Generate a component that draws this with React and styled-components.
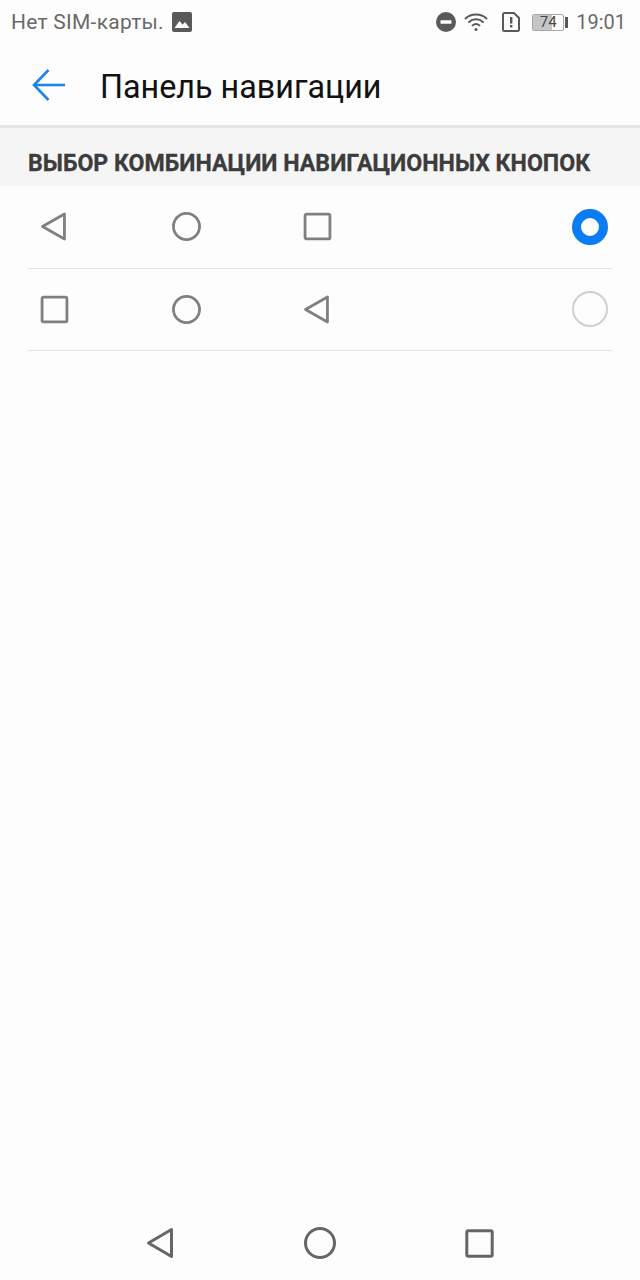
import React from 'react'
import styled, { createGlobalStyle } from 'styled-components'

const GlobalStyle = createGlobalStyle`
  html, body {
    margin: 0;
    padding: 0;
    background: #fdfdfd;
  }
`

const Back = ({ size }) => (
  <svg width={size} height={size} viewBox="0 0 28 28" fill="none" stroke="#808080" strokeWidth="2.7" strokeLinejoin="round">
    <path d="M2.4 14 L23.6 1.9 V26.1 Z" />
  </svg>
)

const Home = ({ size }) => (
  <svg width={size} height={size} viewBox="0 0 28 28" fill="none" stroke="#808080" strokeWidth="2.7">
    <circle cx="14" cy="14" r="12.6" />
  </svg>
)

const Recent = ({ size }) => (
  <svg width={size} height={size} viewBox="0 0 28 28" fill="none" stroke="#808080" strokeWidth="2.7" strokeLinejoin="round">
    <rect x="2" y="2" width="24" height="24" rx="1.5" />
  </svg>
)

const combos = [
  { icons: [Back, Home, Recent], checked: true },
  { icons: [Recent, Home, Back], checked: false },
]

function StatusIcons() {
  return (
    <StatusRight>
      <svg width="22" height="22" viewBox="0 0 22 22">
        <circle cx="11" cy="11" r="10" fill="#595959" />
        <rect x="5.5" y="9.2" width="11" height="3.6" rx="0.6" fill="#fdfdfd" />
      </svg>
      <svg width="24" height="20" viewBox="0 0 24 20" fill="none" stroke="#595959" strokeWidth="1.9" strokeLinecap="round">
        <path d="M1.5 6.5 C7 1.2 17 1.2 22.5 6.5" />
        <path d="M5 10 C9 6.4 15 6.4 19 10" />
        <path d="M8.5 13.4 C10.6 11.6 13.4 11.6 15.5 13.4" />
        <circle cx="12" cy="17.6" r="1.5" fill="#595959" stroke="none" />
      </svg>
      <SimIcon width="18" height="20" viewBox="0 0 18 20">
        <path d="M2.5 1 H12 L17 6 V17.5 Q17 19 15.5 19 H2.5 Q1 19 1 17.5 V2.5 Q1 1 2.5 1 Z" fill="none" stroke="#595959" strokeWidth="2" />
        <rect x="8" y="5" width="2.4" height="6.6" fill="#595959" />
        <rect x="8" y="13" width="2.4" height="2.5" fill="#595959" />
      </SimIcon>
      <Battery>
        <BatteryBody>
          <BatteryFill style={{ width: '62%' }} />
          <BatteryText>74</BatteryText>
        </BatteryBody>
        <BatteryTip />
      </Battery>
      <Clock>19:01</Clock>
    </StatusRight>
  )
}

function App() {
  return (
    <Page>
      <GlobalStyle />
      <StatusBar>
        <StatusLeft>
          <Carrier>Нет SIM-карты.</Carrier>
          <svg width="20" height="20" viewBox="0 0 20 20">
            <rect width="20" height="20" rx="2" fill="#595959" />
            <path d="M2.5 16 L7.5 9 L10.5 12.5 L13 10 L17.5 16 Z" fill="#fdfdfd" />
          </svg>
        </StatusLeft>
        <StatusIcons />
      </StatusBar>

      <Toolbar>
        <svg width="34" height="32" viewBox="0 0 34 32" fill="none" stroke="#1c85e8" strokeWidth="2.6">
          <path d="M33 16 H2.5" />
          <path d="M16.5 1 L2 16 L16.5 31" />
        </svg>
        <Title>Панель навигации</Title>
      </Toolbar>

      <SectionHeader>ВЫБОР КОМБИНАЦИИ НАВИГАЦИОННЫХ КНОПОК</SectionHeader>

      {combos.map((combo, i) => (
        <Row key={i}>
          <IconGroup>
            {combo.icons.map((Icon, j) => (
              <Icon key={j} size={29} />
            ))}
          </IconGroup>
          <Radio $checked={combo.checked} />
        </Row>
      ))}

      <NavBar>
        <svg width="28" height="32" viewBox="0 0 28 32" fill="none" stroke="#666" strokeWidth="3" strokeLinejoin="round">
          <path d="M2.5 16 L25.5 2.5 V29.5 Z" />
        </svg>
        <svg width="32" height="32" viewBox="0 0 32 32" fill="none" stroke="#666" strokeWidth="3">
          <circle cx="16" cy="16" r="14.5" />
        </svg>
        <NavRecent width="29" height="29" viewBox="0 0 29 29" fill="none" stroke="#666" strokeWidth="3" strokeLinejoin="round">
          <rect x="1.8" y="1.8" width="25.4" height="25.4" rx="1.5" />
        </NavRecent>
      </NavBar>
    </Page>
  )
}

const Page = styled.div`
  display: flex;
  flex-direction: column;
  width: 640px;
  height: 1280px;
  overflow: hidden;
  background: #fdfdfd;
  font-family: Roboto, "Noto Sans", sans-serif;
`

const StatusBar = styled.div`
  display: flex;
  align-items: center;
  justify-content: space-between;
  height: 44px;
  padding: 0 14px 0 11px;
  color: #6a6a6a;
`

const StatusLeft = styled.div`
  display: flex;
  align-items: center;
  gap: 8px;
`

const Carrier = styled.span`
  font-size: 21px;
  letter-spacing: 0.25px;
`

const StatusRight = styled.div`
  display: flex;
  align-items: center;
  gap: 7px;
`

const SimIcon = styled.svg`
  margin-left: 7px;
`

const Battery = styled.div`
  display: flex;
  align-items: center;
  gap: 1px;
  margin-left: 5px;
`

const BatteryBody = styled.div`
  position: relative;
  box-sizing: border-box;
  width: 32px;
  height: 17px;
  border: 1px solid #a8a8a8;
  border-radius: 2px;
  overflow: hidden;
`

const BatteryFill = styled.div`
  height: 100%;
  background: #c6c6c6;
`

const BatteryText = styled.span`
  position: absolute;
  inset: 0;
  text-align: center;
  font-size: 15px;
  line-height: 15px;
  color: #4a4a4a;
`

const BatteryTip = styled.div`
  width: 3px;
  height: 11px;
  background: #595959;
`

const Clock = styled.span`
  font-size: 20px;
  margin-left: 1px;
`

const Toolbar = styled.div`
  display: flex;
  align-items: center;
  gap: 34px;
  box-sizing: border-box;
  height: 84px;
  padding-left: 32px;
  border-bottom: 3px solid #e4e4e4;
`

const Title = styled.h1`
  margin: 4px 0 0;
  font-size: 32.3px;
  font-weight: 400;
  color: #111;
`

const SectionHeader = styled.div`
  box-sizing: border-box;
  height: 58px;
  padding: 22px 0 0 28px;
  background: #f5f5f5;
  font-size: 23.15px;
  line-height: 28px;
  font-weight: 700;
  color: #3c3c3c;
  white-space: nowrap;
  -webkit-text-stroke: 0.3px #3c3c3c;
`

const Row = styled.div`
  display: flex;
  align-items: center;
  justify-content: space-between;
  box-sizing: border-box;
  height: 82.5px;
  margin: 0 28px;
  padding: 0 4px 0 12px;
  border-bottom: 1px solid #e3e3e3;
`

const IconGroup = styled.div`
  display: flex;
  align-items: center;
  gap: 102.5px;
`

const Radio = styled.div`
  box-sizing: border-box;
  width: 36px;
  height: 36px;
  border-radius: 50%;
  border: ${props => (props.$checked ? '9px solid #0a7df5' : '2px solid #cfcfcf')};
`

const NavBar = styled.div`
  display: grid;
  grid-template-columns: repeat(3, 160px);
  justify-content: center;
  justify-items: center;
  align-items: center;
  margin-top: auto;
  height: 74px;
`

const NavRecent = styled.svg`
  margin-right: 1px;
`

export default App
